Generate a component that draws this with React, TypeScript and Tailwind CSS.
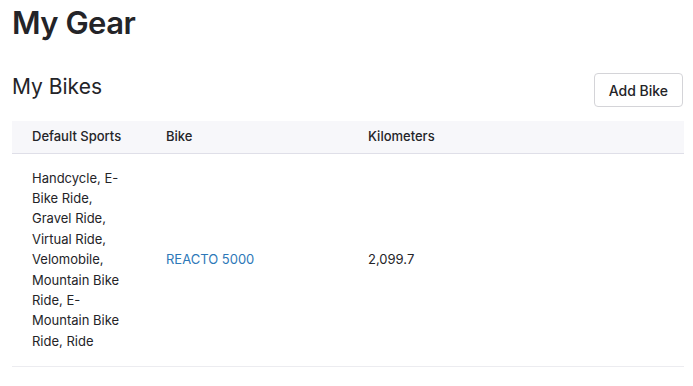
const sports = 'Handcycle, E-Bike Ride, Gravel Ride, Virtual Ride, Velomobile, Mountain Bike Ride, E-Mountain Bike Ride, Ride';

export default function App() {
  return (
    <div className="min-h-screen bg-white pl-3 pr-[9px] text-[#242428]" style={{ fontFamily: 'Inter, "Liberation Sans", sans-serif' }}>
      <h1 className="pt-[3px] text-[31px] font-semibold leading-[40px] tracking-[-0.5px]">My Gear</h1>

      <div className="mt-[30px] flex items-start justify-between">
        <h2 className="text-[21px] font-normal leading-[28px]">My Bikes</h2>
        <button type="button" className="mr-[1px] h-[34px] rounded-[4px] border border-[#d4d4d8] bg-white px-[14px] text-[14px] font-medium text-[#242428]">
          Add Bike
        </button>
      </div>

      <table className="mt-[14px] w-full border-collapse text-left text-[13px]">
        <thead>
          <tr className="border-b border-[#dfdfe8] bg-[#f7f7fa]">
            <th className="h-[32px] w-[154px] pl-5 font-medium">Default Sports</th>
            <th className="w-[202px] font-medium">Bike</th>
            <th className="font-medium">Kilometers</th>
          </tr>
        </thead>
        <tbody>
          <tr className="border-b border-[#ececf0]">
            <td className="pb-[15px] pl-5 pr-[37px] pt-[14px] leading-[20.4px]">{sports}</td>
            <td>
              <a href="#" className="text-[#2d78b8]">REACTO 5000</a>
            </td>
            <td>2,099.7</td>
          </tr>
        </tbody>
      </table>
    </div>
  );
}
